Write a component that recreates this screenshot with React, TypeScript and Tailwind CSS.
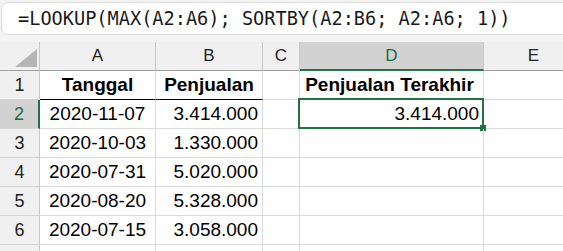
import React from "react";

const W = { rh: "w-[40px]", a: "w-[116px]", b: "w-[107px]", c: "w-[37px]", d: "w-[184px]", e: "w-[100px]" };

const cellFont = { fontFamily: '"Liberation Sans", Arial, sans-serif' };

function HeadCell({ w, label, sel }: { w: string; label: string; sel?: boolean }) {
  return (
    <div
      className={`${w} shrink-0 h-full flex items-center justify-center border-r border-[#c8c8c8] text-[17px] ${
        sel ? "bg-[#d2d2d2] text-[#1e6b41] border-b-2 border-b-[#217346]" : "bg-[#f0f0f0] text-[#222] border-b border-b-[#a0a0a0]"
      }`}
    >
      {label}
    </div>
  );
}

type Row = { n: number; a?: string; b?: string; d?: string; bold?: boolean };

const rows: Row[] = [
  { n: 1, a: "Tanggal", b: "Penjualan", d: "Penjualan Terakhir", bold: true },
  { n: 2, a: "2020-11-07", b: "3.414.000", d: "3.414.000" },
  { n: 3, a: "2020-10-03", b: "1.330.000" },
  { n: 4, a: "2020-07-31", b: "5.020.000" },
  { n: 5, a: "2020-08-20", b: "5.328.000" },
  { n: 6, a: "2020-07-15", b: "3.058.000" },
  { n: 7 },
];

export default function App() {
  return (
    <div className="w-[563px] h-[251px] overflow-hidden bg-white relative" style={cellFont}>
      <div className="h-[42px] bg-[#f3f3f3] pt-[2px] pl-[1px]">
        <div
          className="h-[33px] w-[600px] bg-white border border-[#dcdcdc] rounded-[7px] flex items-center pl-[16px] text-[18.6px] text-[#1a1a1a]"
          style={{ fontFamily: '"DejaVu Sans Mono", "Liberation Mono", monospace' }}
        >
          =LOOKUP(MAX(A2:A6); SORTBY(A2:B6; A2:A6; 1))
        </div>
      </div>
      <div className="flex h-[29px]">
        <div className="w-[40px] shrink-0 h-full bg-[#f0f0f0] border-r border-[#c8c8c8] border-b border-b-[#a0a0a0] relative">
          <svg className="absolute left-[15px] top-[7px]" width="22" height="18" viewBox="0 0 22 18">
            <polygon points="22,0 22,18 0,18" fill="#b5b5b5" />
          </svg>
        </div>
        <HeadCell w={W.a} label="A" />
        <HeadCell w={W.b} label="B" />
        <HeadCell w={W.c} label="C" />
        <HeadCell w={W.d} label="D" sel />
        <HeadCell w={W.e} label="E" />
      </div>
      {rows.map((r) => {
        const sel = r.n === 2;
        return (
          <div key={r.n} className="flex h-[29px] text-[19px] text-black">
            <div
              className={`w-[40px] shrink-0 h-full flex items-center justify-center border-b border-[#d4d4d4] text-[18px] ${
                sel ? "bg-[#d2d2d2] text-[#1e6b41] border-r-2 border-r-[#217346]" : "bg-[#f0f0f0] text-[#222] border-r border-r-[#c8c8c8]"
              }`}
            >
              {r.n < 7 ? r.n : ""}
            </div>
            <div
              className={`${W.a} shrink-0 h-full flex items-center justify-center border-r border-[#dadada] ${
                r.n === 1 ? "border-b border-b-black font-bold" : "border-b border-b-[#dadada]"
              }`}
            >
              {r.a}
            </div>
            <div
              className={`${W.b} shrink-0 h-full flex items-center border-r border-[#dadada] pr-[4px] ${
                r.n === 1 ? "border-b border-b-black font-bold justify-center pl-[4px]" : "border-b border-b-[#dadada] justify-end"
              }`}
            >
              {r.b}
            </div>
            <div className={`${W.c} shrink-0 h-full border-r border-b border-[#dadada]`} />
            <div
              className={`${W.d} shrink-0 h-full flex items-center border-r border-b border-[#dadada] pr-[4px] relative ${
                r.n === 1 ? "font-bold justify-center" : "justify-end"
              }`}
            >
              {r.d}
              {sel && (
                <>
                  <div className="absolute left-[-2px] top-[-2px] w-[186px] h-[31px] border-2 border-[#217346]" />
                  <div className="absolute left-[180px] top-[25px] w-[6px] h-[6px] bg-[#217346]" />
                </>
              )}
            </div>
            <div className={`${W.e} shrink-0 h-full border-r border-b border-[#dadada]`} />
          </div>
        );
      })}
    </div>
  );
}
